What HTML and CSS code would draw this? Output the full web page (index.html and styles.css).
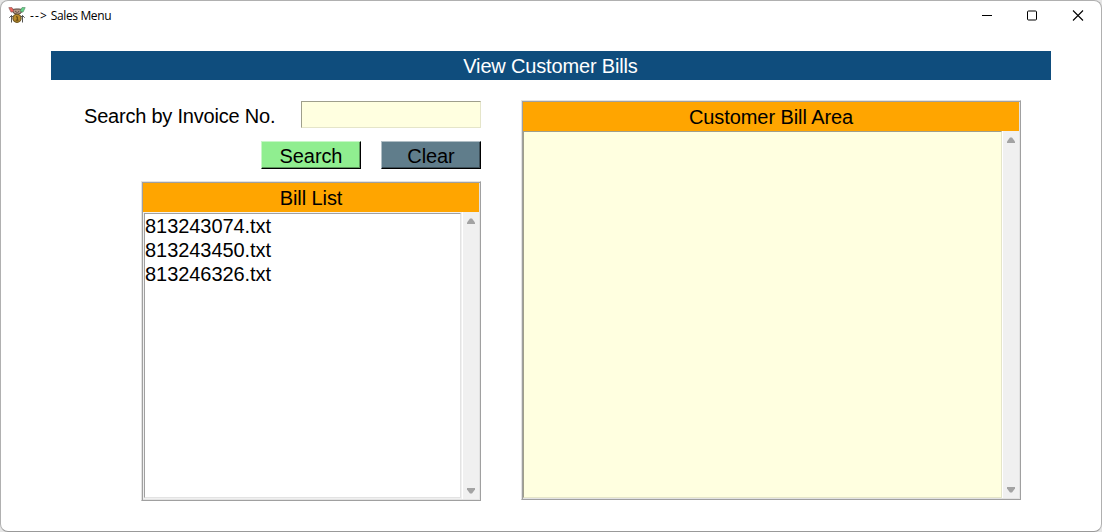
FILE: index.html
```
<!DOCTYPE html>
<html lang="en">
<head>
<meta charset="utf-8">
<title>Sales Menu</title>
<link rel="stylesheet" href="styles.css">
</head>
<body>
<div class="window">
  <header class="titlebar">
    <svg class="app-icon" width="18" height="18" viewBox="0 0 18 18">
      <path d="M4 2.500 8 2h3l3 .5L13 6 9.500 7.500 5.500 6z" fill="#b79b88" stroke="#54443c" stroke-width="1"/>
      <path d="M7 4l2 1.500M11 4 9 6.500" fill="none" stroke="#5b4a42" stroke-width=".9"/>
      <path d="M.8.6 4 .6l2 3.600L3 5.200z" fill="#f0645a" stroke="#805050" stroke-width=".6"/>
      <path d="M17.200.6 14 .6l-2 3.600 3 1z" fill="#65d588" stroke="#508060" stroke-width=".6"/>
      <path d="M3.500 15.500V8.500M1.300 10.700 3.500 8.500l2 2M14.500 15.500V8.500M12.500 10.500 14.500 8.500l2.200 2.200" fill="none" stroke="#555" stroke-width="1"/>
      <circle cx="9" cy="11.300" r="4.100" fill="#b98b2b" stroke="#6d5622" stroke-width="1.100"/>
      <path d="M8 9.800h1.300v3.200M7.700 13.200h2.800" fill="none" stroke="#5d4510" stroke-width="1"/>
    </svg>
    <span class="title"><span class="title-arrow">--&gt;</span> Sales Menu</span>
    <svg class="controls" width="104" height="12" viewBox="0 0 104 12">
      <path d="M1 5.500h10" stroke="#000" stroke-width="1"/>
      <rect x="46.500" y="1" width="9" height="9" rx="1" fill="none" stroke="#000"/>
      <path d="M92 .5l10 10M102 .5l-10 10" stroke="#000" stroke-width="1.100"/>
    </svg>
  </header>
  <h1 class="banner">View Customer Bills</h1>
  <main class="content">
    <section class="left">
      <div class="search-row">
        <label class="search-label" for="invoice">Search by Invoice No.</label>
        <input class="invoice" id="invoice" type="text">
      </div>
      <div class="buttons">
        <button class="btn search">Search</button>
        <button class="btn clear">Clear</button>
      </div>
      <div class="panel list-panel">
        <h2 class="panel-title">Bill List</h2>
        <div class="panel-body">
          <div class="sunken files">
            <div class="file">813243074.txt</div>
            <div class="file">813243450.txt</div>
            <div class="file">813246326.txt</div>
          </div>
          <div class="scrollbar">
            <svg width="8" height="6" viewBox="0 0 8 6"><path d="M0 6V4.500L3 .5h2l3 4V6z" fill="#a3a3a3"/></svg>
            <svg width="8" height="6" viewBox="0 0 8 6"><path d="M0 0v1.500l3 4h2l3-4V0z" fill="#a3a3a3"/></svg>
          </div>
        </div>
      </div>
    </section>
    <section class="panel bill-panel">
      <h2 class="panel-title">Customer Bill Area</h2>
      <div class="panel-body">
        <div class="sunken bill"></div>
        <div class="scrollbar">
          <svg width="8" height="6" viewBox="0 0 8 6"><path d="M0 6V4.500L3 .5h2l3 4V6z" fill="#a3a3a3"/></svg>
          <svg width="8" height="6" viewBox="0 0 8 6"><path d="M0 0v1.500l3 4h2l3-4V0z" fill="#a3a3a3"/></svg>
        </div>
      </div>
    </section>
  </main>
</div>
</body>
</html>
```
FILE: styles.css
```
* { box-sizing: border-box; }
body {
  margin: 0;
  background: #e6e6e6;
  font: 20px/24px "Liberation Sans", Arial, sans-serif;
  color: #000;
}
.window {
  width: 1102px;
  height: 532px;
  border: 1px solid #b0b0b0;
  border-bottom-color: #999;
  border-radius: 8px;
  background: #fff;
  overflow: hidden;
}
.titlebar {
  display: flex;
  align-items: center;
  height: 30px;
  padding: 0 16px 0 7px;
}
.title {
  margin-left: 4px;
  font: 12px/16px "Open Sans", "Noto Sans", sans-serif;
  letter-spacing: -0.35px;
}
.title-arrow { letter-spacing: 1.1px; }
.controls { margin-left: auto; }
.banner {
  height: 29px;
  margin: 20px 50px 0;
  padding-right: 1px;
  background: #0f4d7d;
  color: #fff;
  font: inherit;
  line-height: 30px;
  letter-spacing: -0.16px;
  text-align: center;
}
.content {
  display: flex;
  gap: 40px;
  margin: 20px 80px 0 83px;
}
.left { width: 397px; }
.search-row {
  display: flex;
  justify-content: space-between;
  align-items: flex-end;
  height: 28px;
}
.search-label {
  height: 28px;
  line-height: 32px;
  letter-spacing: -0.21px;
  white-space: nowrap;
}
.invoice {
  width: 180px;
  height: 27px;
  padding: 0 2px;
  border: 1px solid;
  border-color: #9f9f8c #e5e5c9 #e5e5c9 #9f9f8c;
  border-radius: 0;
  background: #ffffe0;
  font: inherit;
}
.buttons {
  display: flex;
  justify-content: flex-end;
  gap: 20px;
  margin-top: 13px;
}
.btn {
  width: 100px;
  height: 28px;
  padding: 2px 0 0;
  border: 1px solid;
  border-radius: 0;
  color: #000;
  font: inherit;
  letter-spacing: -0.1px;
}
.search {
  border-color: #c7f7c7 #000 #000 #c7f7c7;
  background: #90ee90;
  box-shadow: inset -1px -1px #5a955a;
}
.clear {
  border-color: #b0bec5 #000 #000 #b0bec5;
  background: #607d8b;
  box-shadow: inset -1px -1px #3c4e57;
}
.panel {
  display: flex;
  flex-direction: column;
  border: 1px solid;
  border-color: #e3e3e3 #a0a0a0 #a0a0a0 #e3e3e3;
  background: #f0f0f0;
  box-shadow: inset 1px 1px #a0a0a0, inset -1px -1px #e3e3e3;
  padding: 1px;
}
.list-panel {
  width: 340px;
  height: 320px;
  margin: 12px 0 0 auto;
}
.bill-panel { width: 500px; height: 400px; }
.panel-title {
  height: 29px;
  margin: 0;
  background: #ffa500;
  font: inherit;
  line-height: 30px;
  letter-spacing: -0.08px;
  text-align: center;
}
.panel-body { display: flex; flex: 1; min-height: 0; }
.sunken {
  flex: 1;
  border: 1px solid;
  border-color: #a0a0a0 #e3e3e3 #e3e3e3 #a0a0a0;
}
.files {
  margin: 1px;
  background: #fff;
  letter-spacing: -0.06px;
}
.bill {
  border-color: #9f9f8c #e5e5c9 #e5e5c9 #9f9f8c;
  background: #ffffe0;
}
.scrollbar {
  display: flex;
  flex-direction: column;
  align-items: center;
  justify-content: space-between;
  width: 17px;
  padding: 6px 0 5px;
  border-left: 1px solid #fff;
}
```
